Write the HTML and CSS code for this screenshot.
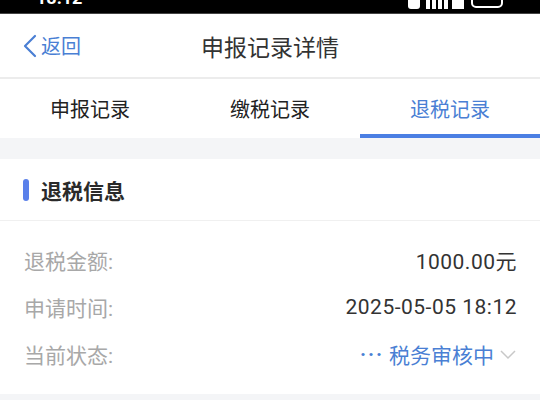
FILE: index.html
```html
<!DOCTYPE html>
<html lang="zh-CN">
<head>
    <meta charset="UTF-8">
    <title>申报记录详情</title>
    <link rel="stylesheet" href="styles.css">
</head>
<body>
    <div class="status-bar">
        <span class="clock">18:12</span>
        <div class="status-icons">
            <svg width="96" height="20" viewBox="0 0 96 20">
                <rect x="0" y="8" width="12" height="12" rx="3" fill="#fff"/>
                <rect x="18" y="10" width="4" height="10" fill="#fff"/>
                <rect x="24" y="7" width="4" height="13" fill="#fff"/>
                <rect x="30" y="4" width="4" height="16" fill="#fff"/>
                <rect x="36" y="1" width="4" height="19" fill="#fff"/>
                <rect x="44" y="4" width="12" height="16" fill="#fff"/>
                <rect x="64" y="2" width="30" height="16" rx="4" fill="none" stroke="#fff" stroke-width="2"/>
            </svg>
        </div>
    </div>

    <div class="nav-bar">
        <a class="back">
            <svg width="16" height="24" viewBox="0 0 16 24">
                <path d="M13 2 L3 12 L13 22" fill="none" stroke="#4a7fd4" stroke-width="2.2" stroke-linecap="round" stroke-linejoin="round"/>
            </svg>
            返回
        </a>
        <div class="nav-title">申报记录详情</div>
    </div>

    <div class="tabs">
        <div class="tab">申报记录</div>
        <div class="tab">缴税记录</div>
        <div class="tab active">退税记录</div>
    </div>

    <div class="gap"></div>

    <div class="section">
        <div class="section-head">
            <span class="mark"></span>
            退税信息
        </div>
        <div class="rows">
            <div class="row">
                <span class="label">退税金额:</span>
                <span class="value">1000.00元</span>
            </div>
            <div class="row">
                <span class="label">申请时间:</span>
                <span class="value">2025-05-05 18:12</span>
            </div>
            <div class="row">
                <span class="label">当前状态:</span>
                <span class="value status">
                    <span class="dots">···</span>
                    税务审核中
                    <svg width="18" height="12" viewBox="0 0 18 12">
                        <path d="M2 3 L9 10 L16 3" fill="none" stroke="#c8c8c8" stroke-width="1.5"/>
                    </svg>
                </span>
            </div>
        </div>
    </div>

    <div class="bottom"></div>
</body>
</html>
```

FILE: styles.css
```css
body {
    margin: 0;
    width: 540px;
    height: 400px;
    overflow: hidden;
    background: #f4f5f7;
    font-family: Roboto, "Noto Sans CJK SC", sans-serif;
    color: #333;
}
.status-bar {
    height: 14px;
    background: #000;
    overflow: hidden;
    display: flex;
    align-items: flex-end;
    justify-content: space-between;
    padding: 0 36px 6px 36px;
    box-sizing: border-box;
    border-bottom: 1px solid #444;
}
.clock {
    color: #fff;
    font-size: 18px;
    font-weight: bold;
    line-height: 18px;
}
.status-icons {
    height: 20px;
    display: flex;
    align-items: flex-end;
    margin-bottom: -2px;
}
.nav-bar {
    height: 63px;
    background: #fff;
    border-bottom: 2px solid #ececec;
    display: grid;
    grid-template-columns: 1fr auto 1fr;
    align-items: center;
    padding: 0 22px;
}
.back {
    display: flex;
    align-items: center;
    gap: 3px;
    color: #4a7fd4;
    font-size: 20px;
    cursor: pointer;
}
.nav-title {
    font-size: 23px;
    color: #333;
}
.tabs {
    display: grid;
    grid-template-columns: 1fr 1fr 1fr;
    background: #fff;
    height: 59px;
}
.tab {
    display: flex;
    align-items: center;
    justify-content: center;
    font-size: 20px;
    color: #222;
    border-bottom: 4px solid transparent;
    padding-top: 4px;
}
.tab.active {
    color: #4a7fd4;
    border-bottom-color: #4b7fe3;
}
.gap {
    height: 21px;
}
.section {
    background: #fff;
}
.section-head {
    height: 61px;
    display: flex;
    align-items: center;
    gap: 12px;
    padding-left: 23px;
    font-size: 21px;
    font-weight: bold;
    color: #2a2a2a;
    border-bottom: 1px solid #f0f0f0;
}
.mark {
    width: 6px;
    height: 22px;
    border-radius: 3px;
    background: #5a80ea;
}
.rows {
    padding: 15px 23px 17px 24px;
}
.row {
    height: 47px;
    display: flex;
    align-items: center;
    justify-content: space-between;
    font-size: 21px;
}
.label {
    color: #a8a8a8;
}
.value {
    color: #333;
    letter-spacing: 0.5px;
}
.status {
    color: #4a7fd4;
    display: flex;
    align-items: center;
    gap: 5px;
    letter-spacing: 0;
}
.dots {
    font-size: 20px;
    font-weight: bold;
    letter-spacing: 2px;
}
.bottom {
    height: 10px;
}
```
